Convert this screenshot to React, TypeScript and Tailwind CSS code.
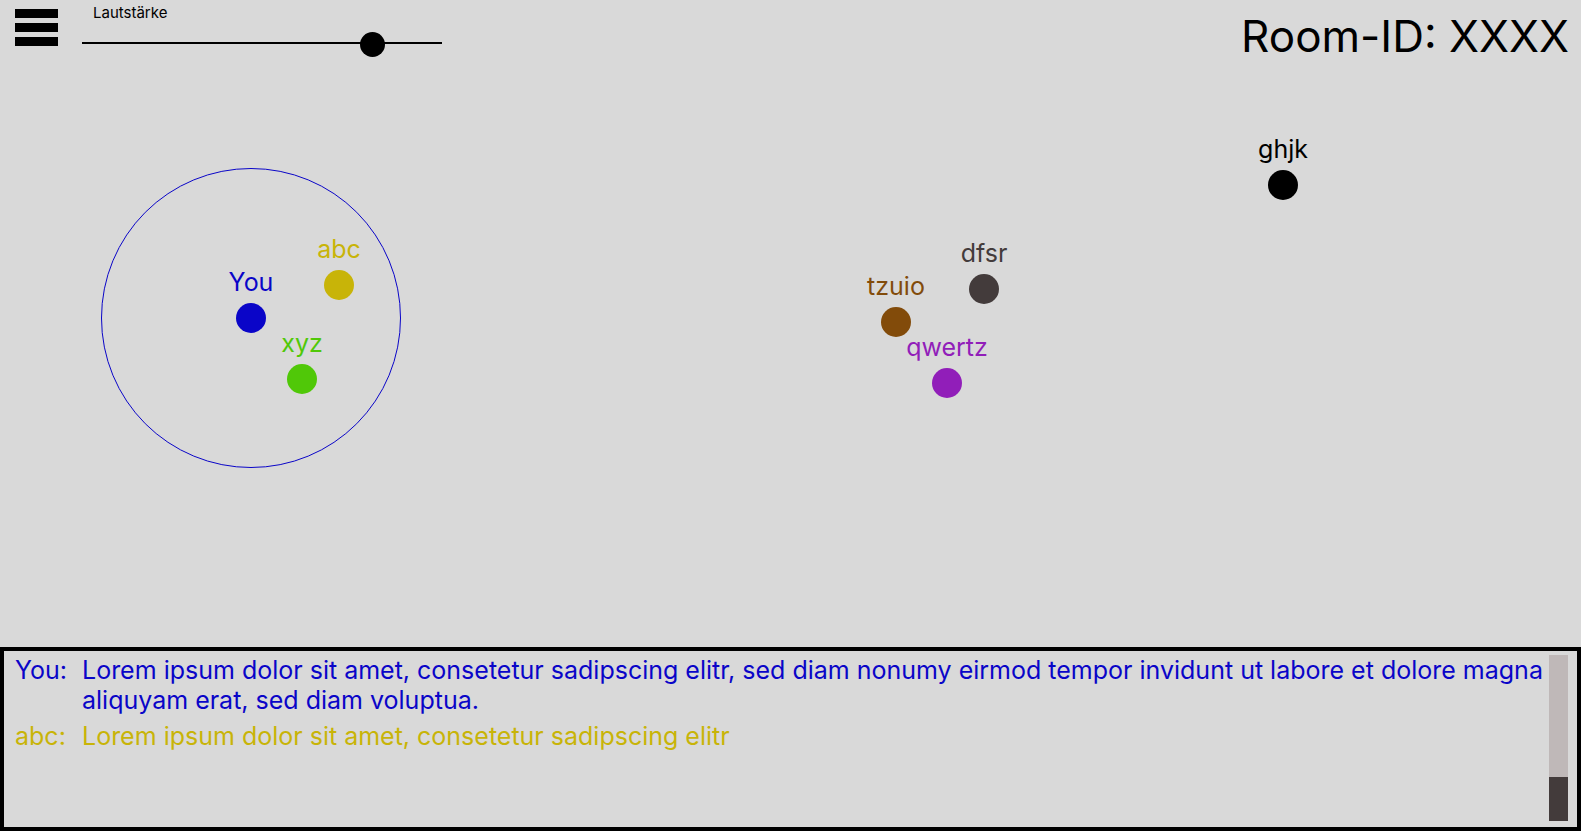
import { useState } from "react";

type Person = {
  name: string;
  place: string;
  text: string;
  dot: string;
};

const people: Person[] = [
  { name: "You", place: "left-[251px] top-[203px]", text: "text-[#0a05c8]", dot: "bg-[#0a05c8]" },
  { name: "abc", place: "left-[339px] top-[170px]", text: "text-[#c8b408]", dot: "bg-[#c8b408]" },
  { name: "xyz", place: "left-[302px] top-[264px]", text: "text-[#50c808]", dot: "bg-[#50c808]" },
  { name: "tzuio", place: "left-[896px] top-[207px]", text: "text-[#824b0a]", dot: "bg-[#824b0a]" },
  { name: "dfsr", place: "left-[984px] top-[174px]", text: "text-[#433b3b]", dot: "bg-[#433b3b]" },
  { name: "qwertz", place: "left-[947px] top-[268px]", text: "text-[#911eb9]", dot: "bg-[#911eb9]" },
  { name: "ghjk", place: "left-[1283px] top-[70px]", text: "text-black", dot: "bg-black" },
];

const messages = [
  {
    from: "You",
    color: "text-[#0a05c8]",
    body: "Lorem ipsum dolor sit amet, consetetur sadipscing elitr, sed diam nonumy eirmod tempor invidunt ut labore et dolore magna aliquyam erat, sed diam voluptua.",
  },
  {
    from: "abc",
    color: "text-[#c8b408]",
    body: "Lorem ipsum dolor sit amet, consetetur sadipscing elitr",
  },
];

function MenuButton() {
  return (
    <button type="button" aria-label="Menu" className="mt-[9px] flex w-[43px] cursor-pointer flex-col gap-[5px]">
      <span className="h-[9px] w-full bg-black" />
      <span className="h-[9px] w-full bg-black" />
      <span className="h-[9px] w-full bg-black" />
    </button>
  );
}

function Volume() {
  const [volume, setVolume] = useState(83);
  return (
    <div className="flex w-[360px] flex-col gap-[9px] pt-1">
      <label htmlFor="volume" className="pl-[11px] text-[15px] leading-[18px]">
        Lautstärke
      </label>
      <input
        id="volume"
        type="range"
        min={0}
        max={100}
        value={volume}
        onChange={(e) => setVolume(Number(e.target.value))}
        className="h-6 w-full cursor-pointer appearance-none bg-transparent [&::-webkit-slider-runnable-track]:h-[2px] [&::-webkit-slider-runnable-track]:bg-black [&::-webkit-slider-thumb]:mt-[-10px] [&::-webkit-slider-thumb]:size-[25px] [&::-webkit-slider-thumb]:appearance-none [&::-webkit-slider-thumb]:rounded-full [&::-webkit-slider-thumb]:bg-black"
      />
    </div>
  );
}

/* A participant on the map: the anchor point is the top centre of the label. */
function Marker({ person }: { person: Person }) {
  return (
    <li className={`absolute flex w-24 -translate-x-1/2 flex-col items-center gap-[6px] ${person.place} ${person.text}`}>
      <span>{person.name}</span>
      <span className={`size-[30px] rounded-full ${person.dot}`} />
    </li>
  );
}

export default function App() {
  return (
    <div className="flex min-h-screen flex-col bg-[#d9d9d9] font-['Inter',sans-serif] text-[25px] leading-[30px] text-black">
      <header className="flex h-16 items-start gap-6 pr-3 pl-[15px]">
        <MenuButton />
        <Volume />
        <h1 className="ml-auto pt-[9px] text-[44px] leading-[54px] whitespace-nowrap">Room-ID: XXXX</h1>
      </header>

      <main className="relative flex-1 overflow-hidden">
        <div className="absolute top-[104px] left-[101px] size-[300px] rounded-full border border-[#0a05c8]" />
        <ul>
          {people.map((p) => (
            <Marker key={p.name} person={p} />
          ))}
        </ul>
      </main>

      <section aria-label="Chat" className="flex min-h-[184px] border-4 border-black pt-1 pr-[9px] pb-[6px] pl-[11px]">
        <ul className="flex flex-1 flex-col gap-[6px]">
          {messages.map((m) => (
            <li key={m.from} className={`flex ${m.color}`}>
              <span className="w-[67px] shrink-0">{m.from}:</span>
              <p className="flex-1">{m.body}</p>
            </li>
          ))}
        </ul>
        <div aria-hidden="true" className="flex w-[19px] flex-col justify-end bg-[#bfb8b8]">
          <div className="h-11 bg-[#433b3b]" />
        </div>
      </section>
    </div>
  );
}
